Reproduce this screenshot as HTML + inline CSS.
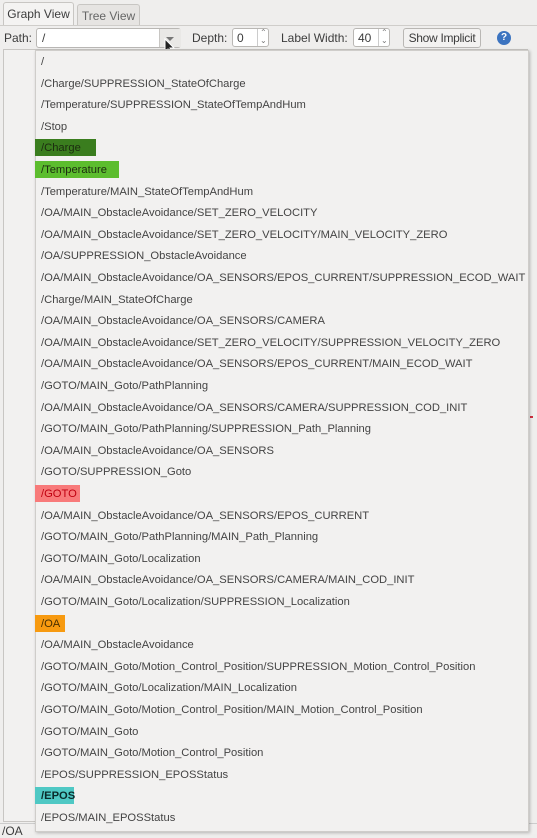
<!DOCTYPE html>
<html><head><meta charset="utf-8"><style>
*{margin:0;padding:0;box-sizing:border-box}
body{width:537px;height:834px;background:#efeeed;font-family:"Liberation Sans","DejaVu Sans",sans-serif;font-size:12px;color:#3c3c3c;position:relative;overflow:hidden}
.abs{position:absolute}
.tab{position:absolute;top:2px;height:24px;border:1px solid #c8c6c3;border-bottom:none;border-radius:3px 3px 0 0;line-height:23px;text-align:center}
.field{position:absolute;background:#fff;border:1px solid #b9b7b4;border-radius:3px}
.pop{position:absolute;left:35px;top:50px;width:494px;height:782px;background:#f2f1f0;border:1px solid #cfcdca;box-shadow:1px 1px 3px rgba(0,0,0,.25);font-size:11.2px;color:#444}
.row{position:absolute;left:5px;height:21.6px;line-height:23px;white-space:nowrap}
.hl{position:absolute;left:-1px;height:17px;top:2px;}
</style></head><body>
<div class="tab" style="left:3px;width:71px;background:#f4f3f2;color:#3c3c3c">Graph View</div>
<div class="tab" style="left:77px;width:63px;top:4px;height:22px;background:#e6e4e2;color:#666">Tree View</div>
<div class="abs" style="left:0;top:25px;width:537px;height:1px;background:#cfcdca"></div>
<div class="abs" style="left:4px;top:31px">Path:</div>
<div class="field" style="left:36px;top:28px;width:145px;height:20px"><span class="abs" style="left:5px;top:2px">/</span>
<div class="abs" style="left:122px;top:0;width:22px;height:18px;background:#e9e8e6;border-left:1px solid #c8c6c3"></div>
<div class="abs" style="left:129px;top:8px;width:0;height:0;border-left:4px solid transparent;border-right:4px solid transparent;border-top:4px solid #777"></div></div>
<svg class="abs" style="left:164px;top:38px" width="12" height="18"><path d="M1 1 L1 14 L4 11 L7 17 L9 16 L6 10 L10 10 Z" fill="#222" stroke="#fff" stroke-width="1"/></svg>
<div class="abs" style="left:192px;top:31px">Depth:</div>
<div class="field" style="left:232px;top:28px;width:37px;height:19px"><span class="abs" style="left:4px;top:2px">0</span><div class="abs" style="left:24px;top:0;width:1px;height:17px;background:#ccc"></div><span class="abs" style="left:27px;top:0;font-size:8px;line-height:8px;color:#777">⌃<br>⌄</span></div>
<div class="abs" style="left:281px;top:31px">Label Width:</div>
<div class="field" style="left:353px;top:28px;width:37px;height:19px"><span class="abs" style="left:4px;top:2px">40</span><div class="abs" style="left:24px;top:0;width:1px;height:17px;background:#ccc"></div><span class="abs" style="left:27px;top:0;font-size:8px;line-height:8px;color:#777">⌃<br>⌄</span></div>
<div class="abs" style="left:403px;top:28px;width:78px;height:20px;border:1px solid #b9b7b4;border-radius:3px;background:#f3f2f1;text-align:center;line-height:18px;letter-spacing:-0.3px">Show Implicit</div>
<div class="abs" style="left:497px;top:31px;width:14px;height:14px;border-radius:50%;background:#3c74c0;color:#fff;font-size:10px;font-weight:bold;text-align:center;line-height:14px">?</div>
<div class="abs" style="left:3px;top:49px;width:525px;height:773px;background:#f2f1f0;border:1px solid #c8c6c3"></div>
<div class="abs" style="left:530px;top:416px;width:3px;height:2px;background:#d03040"></div>
<div class="abs" style="left:0;top:823px;width:537px;height:11px;background:#f0efee;border-top:1px solid #ccc"></div>
<div class="abs" style="left:2px;top:824px;font-size:12px">/OA</div>
<div class="pop">
<div class="row" style="top:0">/</div>
<div class="row" style="top:21.6px">/Charge/SUPPRESSION_StateOfCharge</div>
<div class="row" style="top:43.2px">/Temperature/SUPPRESSION_StateOfTempAndHum</div>
<div class="row" style="top:64.8px">/Stop</div>
<div class="row" style="top:86.4px;left:0"><div class="hl" style="width:61px;background:#3a7d1e"></div><span style="position:relative;left:5px;color:#1c2c10">/Charge</span></div>
<div class="row" style="top:108px;left:0"><div class="hl" style="width:84px;background:#5cbd2e"></div><span style="position:relative;left:5px;color:#1c2c10">/Temperature</span></div>
<div class="row" style="top:129.6px">/Temperature/MAIN_StateOfTempAndHum</div>
<div class="row" style="top:151.2px">/OA/MAIN_ObstacleAvoidance/SET_ZERO_VELOCITY</div>
<div class="row" style="top:172.8px">/OA/MAIN_ObstacleAvoidance/SET_ZERO_VELOCITY/MAIN_VELOCITY_ZERO</div>
<div class="row" style="top:194.4px">/OA/SUPPRESSION_ObstacleAvoidance</div>
<div class="row" style="top:216px">/OA/MAIN_ObstacleAvoidance/OA_SENSORS/EPOS_CURRENT/SUPPRESSION_ECOD_WAIT</div>
<div class="row" style="top:237.6px">/Charge/MAIN_StateOfCharge</div>
<div class="row" style="top:259.2px">/OA/MAIN_ObstacleAvoidance/OA_SENSORS/CAMERA</div>
<div class="row" style="top:280.8px">/OA/MAIN_ObstacleAvoidance/SET_ZERO_VELOCITY/SUPPRESSION_VELOCITY_ZERO</div>
<div class="row" style="top:302.4px">/OA/MAIN_ObstacleAvoidance/OA_SENSORS/EPOS_CURRENT/MAIN_ECOD_WAIT</div>
<div class="row" style="top:324px">/GOTO/MAIN_Goto/PathPlanning</div>
<div class="row" style="top:345.6px">/OA/MAIN_ObstacleAvoidance/OA_SENSORS/CAMERA/SUPPRESSION_COD_INIT</div>
<div class="row" style="top:367.2px">/GOTO/MAIN_Goto/PathPlanning/SUPPRESSION_Path_Planning</div>
<div class="row" style="top:388.8px">/OA/MAIN_ObstacleAvoidance/OA_SENSORS</div>
<div class="row" style="top:410.4px">/GOTO/SUPPRESSION_Goto</div>
<div class="row" style="top:432px;left:0"><div class="hl" style="width:45px;background:#f87a7a"></div><span style="position:relative;left:5px;color:#c00010">/GOTO</span></div>
<div class="row" style="top:453.6px">/OA/MAIN_ObstacleAvoidance/OA_SENSORS/EPOS_CURRENT</div>
<div class="row" style="top:475.2px">/GOTO/MAIN_Goto/PathPlanning/MAIN_Path_Planning</div>
<div class="row" style="top:496.8px">/GOTO/MAIN_Goto/Localization</div>
<div class="row" style="top:518.4px">/OA/MAIN_ObstacleAvoidance/OA_SENSORS/CAMERA/MAIN_COD_INIT</div>
<div class="row" style="top:540px">/GOTO/MAIN_Goto/Localization/SUPPRESSION_Localization</div>
<div class="row" style="top:561.6px;left:0"><div class="hl" style="width:30px;background:#f79a10"></div><span style="position:relative;left:5px;color:#4a3000">/OA</span></div>
<div class="row" style="top:583.2px">/OA/MAIN_ObstacleAvoidance</div>
<div class="row" style="top:604.8px">/GOTO/MAIN_Goto/Motion_Control_Position/SUPPRESSION_Motion_Control_Position</div>
<div class="row" style="top:626.4px">/GOTO/MAIN_Goto/Localization/MAIN_Localization</div>
<div class="row" style="top:648px">/GOTO/MAIN_Goto/Motion_Control_Position/MAIN_Motion_Control_Position</div>
<div class="row" style="top:669.6px">/GOTO/MAIN_Goto</div>
<div class="row" style="top:691.2px">/GOTO/MAIN_Goto/Motion_Control_Position</div>
<div class="row" style="top:712.8px">/EPOS/SUPPRESSION_EPOSStatus</div>
<div class="row" style="top:734.4px;left:0"><div class="hl" style="width:39px;background:#4fc8c4"></div><span style="position:relative;left:5px;color:#0a2a2a;font-weight:bold">/EPOS</span></div>
<div class="row" style="top:756px">/EPOS/MAIN_EPOSStatus</div>
</div>
</body></html>
